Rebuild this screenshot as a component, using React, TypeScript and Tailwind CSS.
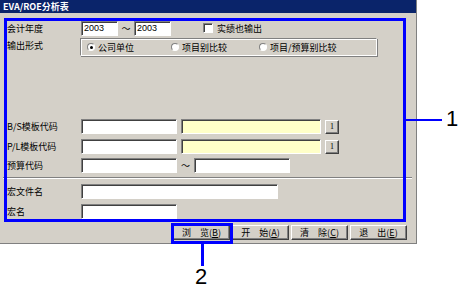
import React from "react";

const sunkenBorder =
  "border border-t-[#808080] border-l-[#808080] border-r-white border-b-white shadow-[inset_1px_1px_0_#404040]";
const raised =
  "bg-[#d4d0c8] border border-t-white border-l-white border-r-[#404040] border-b-[#404040] shadow-[inset_-1px_-1px_0_#808080]";

function Input({ w, yellow, value }: { w: string; yellow?: boolean; value?: string }) {
  return (
    <div
      className={`${sunkenBorder} ${w} ${
        yellow ? "bg-[#ffffc8]" : "bg-white"
      } h-[15px] flex items-center pl-[2px] text-[9px] font-['Liberation_Sans',sans-serif]`}
    >
      {value}
    </div>
  );
}

function Radio({ checked, label }: { checked?: boolean; label: string }) {
  return (
    <div className="flex items-center gap-[3px]">
      <span className="w-[8px] h-[8px] rounded-full bg-white border border-t-[#808080] border-l-[#808080] border-r-white border-b-white flex items-center justify-center">
        {checked && <span className="w-[3px] h-[3px] rounded-full bg-black" />}
      </span>
      <span>{label}</span>
    </div>
  );
}

function Btn({ label, k }: { label: string; k: string }) {
  return (
    <button className={`${raised} w-[57px] h-[15px] flex items-center justify-center text-[9px] leading-none`}>
      {label}(<span className="underline">{k}</span>)
    </button>
  );
}

function Label({ text }: { text: string }) {
  return <div className="w-[74px] shrink-0">{text}</div>;
}

export default function App() {
  return (
    <div className="relative w-[458px] h-[295px] bg-white overflow-hidden font-['Noto_Sans_CJK_SC',sans-serif] text-[9px] leading-none text-black">
      <div className="w-[417px] h-[244px] bg-[#d4d0c8] border-r border-b border-[#808080] flex flex-col">
        <div className="h-[13px] bg-[#0a246a] text-white font-bold flex items-center pl-[3px] text-[9px]">
          EVA/ROE分析表
        </div>

        <div className="pl-[7px] flex flex-col">
          <div className="mt-[8px] h-[14px] flex items-center">
            <Label text="会计年度" />
            <Input w="w-[37px]" value="2003" />
            <span className="w-[16px] text-center">～</span>
            <Input w="w-[37px]" value="2003" />
            <span className={`${sunkenBorder} bg-white ml-[32px] w-[10px] h-[10px]`} />
            <span className="ml-[4px]">实绩也输出</span>
          </div>

          <div className="mt-[3px] flex items-start">
            <div className="w-[73px] shrink-0 pt-[3px]">输出形式</div>
            <div className="w-[297px] h-[18px] border border-t-[#808080] border-l-[#808080] border-r-white border-b-white shadow-[inset_1px_1px_0_white,1px_1px_0_#808080] flex items-center pl-[6px]">
              <div className="w-[84px]">
                <Radio checked label="公司单位" />
              </div>
              <div className="w-[88px]">
                <Radio label="项目别比较" />
              </div>
              <Radio label="项目/预算别比较" />
            </div>
          </div>

          <div className="mt-[63px] h-[15px] flex items-center">
            <Label text="B/S模板代码" />
            <Input w="w-[96px]" />
            <div className="ml-[4px]">
              <Input w="w-[140px]" yellow />
            </div>
            <button className={`${raised} ml-[4px] w-[14px] h-[14px] text-[8px] font-['Liberation_Serif',serif]`}>1</button>
          </div>

          <div className="mt-[5px] h-[15px] flex items-center">
            <Label text="P/L模板代码" />
            <Input w="w-[96px]" />
            <div className="ml-[4px]">
              <Input w="w-[140px]" yellow />
            </div>
            <button className={`${raised} ml-[4px] w-[14px] h-[14px] text-[8px] font-['Liberation_Serif',serif]`}>1</button>
          </div>

          <div className="mt-[4px] h-[15px] flex items-center">
            <Label text="预算代码" />
            <Input w="w-[96px]" />
            <span className="w-[17px] text-center">～</span>
            <Input w="w-[96px]" />
          </div>
        </div>

        <div className="mt-[4px] ml-[3px] w-[409px] h-[2px] border-t border-t-[#808080] border-b border-b-white" />

        <div className="pl-[7px] flex flex-col">
          <div className="mt-[5px] h-[15px] flex items-center">
            <Label text="宏文件名" />
            <Input w="w-[197px]" />
          </div>
          <div className="mt-[5px] h-[15px] flex items-center">
            <Label text="宏名" />
            <Input w="w-[96px]" />
          </div>
        </div>

        <div className="mt-[6px] pl-[173px] flex gap-[2px]">
          <Btn label="浏　览" k="B" />
          <Btn label="开　始" k="A" />
          <Btn label="清　除" k="C" />
          <Btn label="退　出" k="E" />
        </div>
      </div>

      {/* callout overlays */}
      <div className="absolute left-[4px] top-[18px] w-[402px] h-[204px] border-[3px] border-[#0000ff]" />
      <div className="absolute left-[405px] top-[119px] w-[37px] h-[2px] bg-[#0000ff]" />
      <div className="absolute left-[446px] top-[108px] text-[22px] font-['Liberation_Sans',sans-serif]">1</div>

      <div className="absolute left-[171px] top-[223px] w-[62px] h-[21px] border-[3px] border-[#0000ff]" />
      <div className="absolute left-[201px] top-[244px] w-[3px] h-[22px] bg-[#0000ff]" />
      <div className="absolute left-[195px] top-[266px] text-[22px] font-['Liberation_Sans',sans-serif]">2</div>
    </div>
  );
}
